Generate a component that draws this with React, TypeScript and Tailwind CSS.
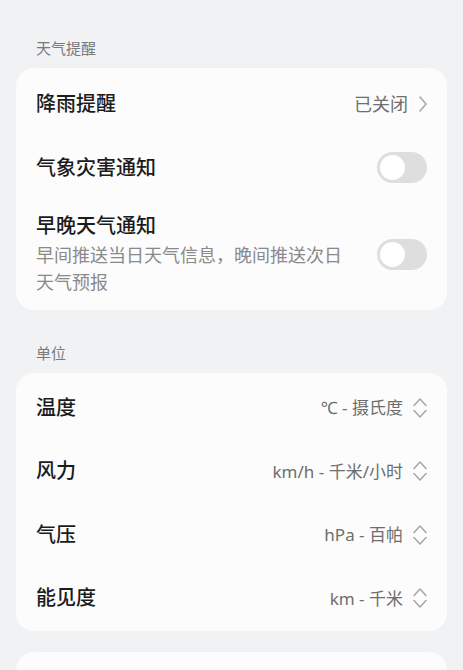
const font = {
  fontFamily: '"Noto Sans", "Noto Sans CJK SC", sans-serif',
};

function Toggle() {
  return (
    <span className="flex h-[31px] w-[50px] shrink-0 items-center rounded-full bg-[#dedede] px-[3px]">
      <span className="h-[25px] w-[25px] rounded-full bg-white" />
    </span>
  );
}

function UpDown() {
  return (
    <svg width="16" height="24" viewBox="0 0 16 24" fill="none" className="shrink-0">
      <path d="M2 9.5 8 3 14 9.5" stroke="#a8a8a8" strokeWidth="1.6" strokeLinecap="round" strokeLinejoin="round" />
      <path d="M2 14.5 8 21 14 14.5" stroke="#a8a8a8" strokeWidth="1.6" strokeLinecap="round" strokeLinejoin="round" />
    </svg>
  );
}

function SectionHeader({ label, first = false }: { label: string; first?: boolean }) {
  return (
    <div
      className={[
        "px-5 pb-[10px] text-[15px] leading-5 text-[#7a7a7a]",
        first ? "pt-[38px]" : "pt-[33px]",
      ].join(" ")}
    >
      {label}
    </div>
  );
}

function UnitRow({ label, value }: { label: string; value: string }) {
  return (
    <div className="flex h-[63.5px] items-center justify-between pl-5 pr-[19px]">
      <span className="text-[20px] font-medium text-[#1b1b1b]">{label}</span>
      <span className="flex items-center gap-[9px] text-[17px] text-[#6e6e6e]">
        {value}
        <UpDown />
      </span>
    </div>
  );
}

export default function App() {
  return (
    <div className="min-h-[670px] bg-[#f1f2f4] px-4" style={font}>
      <SectionHeader label="天气提醒" first />

      <section className="rounded-[18px] bg-[#fcfcfc] pt-1 pb-[14px]">
        <div className="flex h-16 items-center justify-between pl-5 pr-[19px]">
          <span className="text-[20px] font-medium text-[#1b1b1b]">降雨提醒</span>
          <span className="flex items-center gap-[10px] text-[18px] text-[#6e6e6e]">
            已关闭
            <svg width="10" height="18" viewBox="0 0 10 18" fill="none">
              <path d="M2 2 8 9 2 16" stroke="#a8a8a8" strokeWidth="1.6" strokeLinecap="round" strokeLinejoin="round" />
            </svg>
          </span>
        </div>

        <div className="flex h-[63px] items-center justify-between pl-5 pr-5">
          <span className="text-[20px] font-medium text-[#1b1b1b]">气象灾害通知</span>
          <Toggle />
        </div>

        <div className="flex items-center justify-between gap-5 pt-[13px] pl-5 pr-5">
          <div className="min-w-0 flex-1">
            <div className="text-[20px] leading-7 font-medium text-[#1b1b1b]">早晚天气通知</div>
            <p className="mt-[2px] max-w-[315px] text-[18px] leading-[27px] text-[#8a8a8a]">
              早间推送当日天气信息，晚间推送次日天气预报
            </p>
          </div>
          <Toggle />
        </div>
      </section>

      <SectionHeader label="单位" />

      <section className="rounded-[18px] bg-[#fcfcfc] pt-[3px] pb-[1px]">
        <UnitRow label="温度" value="℃ - 摄氏度" />
        <UnitRow label="风力" value="km/h - 千米/小时" />
        <UnitRow label="气压" value="hPa - 百帕" />
        <UnitRow label="能见度" value="km - 千米" />
      </section>

      <section className="mt-[21px] h-[40px] rounded-t-[18px] bg-[#fcfcfc]" />
    </div>
  );
}
